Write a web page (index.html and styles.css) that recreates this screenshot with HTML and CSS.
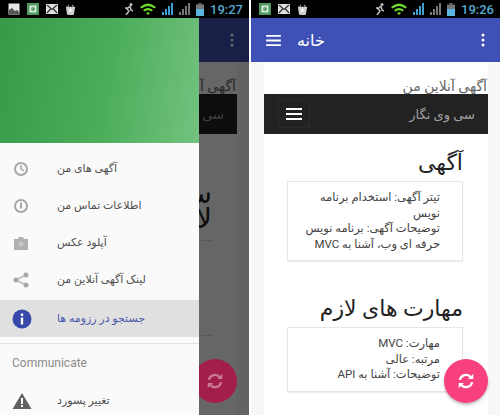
FILE: index.html
```html
<!DOCTYPE html>
<html lang="fa">
  <head>
    <meta charset="UTF-8" />
    <meta name="viewport" content="width=device-width, initial-scale=1.0" />
    <title>CV</title>
    <link rel="stylesheet" href="styles.css">
  </head>
  <body>
    <svg class="sprite">
      <symbol id="i-photo" viewBox="0 0 12 12"><rect x="0.5" y="0.5" width="11" height="11" fill="#e8e8e8"/><path d="M1 11V7l3-2 3 3 2-1 2 2v2z" fill="#555"/></symbol>
      <symbol id="i-app" viewBox="0 0 12 12"><rect width="12" height="12" fill="#4e9a5e"/><rect x="2.500" y="2.500" width="7" height="7" fill="#d6e8d8"/><circle cx="6" cy="6" r="2" fill="#5d9f6b"/></symbol>
      <symbol id="i-mail" viewBox="0 0 12 10"><rect width="12" height="10" fill="#e2e2e2"/><path d="M1 1l5 4.500L11 1M1 9l3.500-4M11 9L7.500 5" fill="none" stroke="#333" stroke-width="1.300"/></symbol>
      <symbol id="i-bot" viewBox="0 0 12 12"><path d="M1 3h10l-1 7q0 2-2 2H4q-2 0-2-2z" fill="#cfcfcf"/><path d="M3 3l1-2M9 3L8 1" stroke="#cfcfcf"/><circle cx="6" cy="7" r="2" fill="#eee"/></symbol>
      <symbol id="i-run" viewBox="0 0 10 12"><circle cx="7" cy="1.500" r="1.500" fill="#bbb"/><path d="M6 3L3 6l2 2-3 4M6 3l1 4 2 1M4 5L1 5" fill="none" stroke="#bbb" stroke-width="1.500"/></symbol>
      <symbol id="i-wifi" viewBox="0 0 16 12"><path d="M0 4q8-7 16 0l-1.500 1.500q-6.500-5-13 0z" fill="#6fdc2c"/><path d="M3 7q5-4 10 0l-1.500 1.500q-3.500-2.500-7 0z" fill="#6fdc2c"/><path d="M6 10q2-1.500 4 0l-2 2z" fill="#6fdc2c"/></symbol>
      <symbol id="i-sig" viewBox="0 0 11 12"><path d="M0 9h2v3H0zM3 6h2v6H3zM6 3h2v9H6zM9 0h2v12H9z" fill="currentColor"/></symbol>
      <symbol id="i-bat" viewBox="0 0 8 13"><path d="M2.500 0h3v1.500h-3z" fill="#778"/><path d="M0 1.500h8V6H0z" fill="#777"/><path d="M0 6h8v7H0z" fill="#5ab4e0"/></symbol>
      <symbol id="i-menu" viewBox="0 0 16 12"><path d="M0 0h16v2H0zM0 5h16v2H0zM0 10h16v2H0z" fill="currentColor"/></symbol>
      <symbol id="i-more" viewBox="0 0 4 14"><circle cx="2" cy="2" r="1.500" fill="currentColor"/><circle cx="2" cy="7" r="1.500" fill="currentColor"/><circle cx="2" cy="12" r="1.500" fill="currentColor"/></symbol>
      <symbol id="i-sync" viewBox="0 0 16 16"><path d="M2.500 7a5.600 5.600 0 0 1 9.800-2.400M13.500 9a5.600 5.600 0 0 1-9.800 2.400" fill="none" stroke="currentColor" stroke-width="2"/><path d="M14.500 1.500v4.700h-4.700zM1.500 14.500V9.800h4.700z" fill="currentColor"/></symbol>
    </svg>

    <div class="screens">
      <div class="phone">
        <div class="status">
          <svg class="st" width="12" height="12"><use href="#i-photo"/></svg>
          <svg class="st" width="12" height="12"><use href="#i-app"/></svg>
          <svg class="st" width="12" height="10"><use href="#i-mail"/></svg>
          <svg class="st" width="11" height="11"><use href="#i-bot"/></svg>
          <span class="st-gap"></span>
          <svg width="10" height="12"><use href="#i-run"/></svg>
          <svg width="16" height="12"><use href="#i-wifi"/></svg>
          <svg class="sig-blue" width="11" height="12"><use href="#i-sig"/></svg>
          <svg class="sig-gray" width="11" height="12"><use href="#i-sig"/></svg>
          <svg width="8" height="13"><use href="#i-bat"/></svg>
          <span class="clock">19:27</span>
        </div>
        <div class="appbar">
          <svg class="menu-icon" width="15" height="11"><use href="#i-menu"/></svg>
          <span class="appbar-title">خانه</span>
          <svg class="more-icon" width="4" height="14"><use href="#i-more"/></svg>
        </div>
        <div class="page">
          <div class="wrap">
            <div class="page-caption">آگهی آنلاین من</div>
            <div class="navbar">
              <span class="toggle"><svg width="18" height="12"><use href="#i-menu"/></svg></span>
              <span class="brand">سی وی نگار</span>
            </div>
            <h2 class="hidden-heading">س&zwj;<br>لا</h2>
            <div class="hidden-box"></div>
          </div>
        </div>
        <div class="scrim"></div>
        <span class="fab fab-dim"><svg width="18" height="18"><use href="#i-sync"/></svg></span>
        <div class="drawer">
          <div class="drawer-head"></div>
          <div class="drawer-list">
            <div class="drawer-item">
              <svg class="drawer-icon" width="18" height="18" viewBox="0 0 18 18"><circle cx="9" cy="9" r="6" fill="none" stroke="#a8a8a8" stroke-width="2"/><path d="M9 5v4l3 2" fill="none" stroke="#a8a8a8" stroke-width="1.500"/></svg>
              <span>آگهی های من</span>
            </div>
            <div class="drawer-item">
              <svg class="drawer-icon" width="18" height="18" viewBox="0 0 18 18"><circle cx="9" cy="9" r="6" fill="none" stroke="#a8a8a8" stroke-width="2"/><path d="M9 5.500v6" stroke="#a8a8a8" stroke-width="2"/></svg>
              <span>اطلاعات تماس من</span>
            </div>
            <div class="drawer-item">
              <svg class="drawer-icon" width="18" height="18" viewBox="0 0 18 18"><path d="M2 5h4l1-2h4l1 2h4v11H2z" fill="#b0b0b0"/><circle cx="9" cy="10" r="2.500" fill="#c8c8c8"/></svg>
              <span>آپلود عکس</span>
            </div>
            <div class="drawer-item">
              <svg class="drawer-icon" width="18" height="18" viewBox="0 0 18 18"><circle cx="14" cy="4" r="2.500" fill="#a8a8a8"/><circle cx="4" cy="9" r="2.500" fill="#a8a8a8"/><circle cx="14" cy="14" r="2.500" fill="#a8a8a8"/><path d="M14 4L4 9l10 5" fill="none" stroke="#a8a8a8" stroke-width="1.300"/></svg>
              <span>لینک آگهی آنلاین من</span>
            </div>
            <div class="drawer-item active">
              <svg class="drawer-icon" width="20" height="20" viewBox="0 0 20 20"><circle cx="10" cy="10" r="9.500" fill="#3949ab"/><path d="M8.800 4.500h2.400v2.400H8.800zM8.800 8.500h2.400v7H8.800z" fill="#fff"/></svg>
              <span>جستجو در رزومه ها</span>
            </div>
          </div>
          <div class="drawer-sep"></div>
          <div class="drawer-section">Communicate</div>
          <div class="drawer-item">
            <svg class="drawer-icon" width="20" height="18" viewBox="0 0 20 18"><path d="M10 1l9.500 16H.5z" fill="#616161"/><path d="M9 6h2v6H9zM9 13h2v2H9z" fill="#fafafa"/></svg>
            <span>تغییر پسورد</span>
          </div>
        </div>
      </div>

      <div class="phone">
        <div class="status">
          <svg class="st" width="12" height="12"><use href="#i-app"/></svg>
          <svg class="st" width="12" height="10"><use href="#i-mail"/></svg>
          <svg class="st" width="11" height="11"><use href="#i-bot"/></svg>
          <span class="st-gap"></span>
          <svg width="10" height="12"><use href="#i-run"/></svg>
          <svg width="16" height="12"><use href="#i-wifi"/></svg>
          <svg class="sig-blue" width="11" height="12"><use href="#i-sig"/></svg>
          <svg class="sig-gray" width="11" height="12"><use href="#i-sig"/></svg>
          <svg width="8" height="13"><use href="#i-bat"/></svg>
          <span class="clock">19:26</span>
        </div>
        <div class="appbar">
          <svg class="menu-icon" width="15" height="11"><use href="#i-menu"/></svg>
          <span class="appbar-title">خانه</span>
          <svg class="more-icon" width="4" height="14"><use href="#i-more"/></svg>
        </div>
        <div class="page">
          <div class="wrap">
            <div class="page-caption">آگهی آنلاین من</div>
            <div class="navbar">
              <span class="toggle"><svg width="18" height="12"><use href="#i-menu"/></svg></span>
              <span class="brand">سی وی نگار</span>
            </div>
            <div class="section">
              <h2>آگهی</h2>
              <div class="box">
                <div>تیتر آگهی: استخدام برنامه</div>
                <div>نویس</div>
                <div>توضیحات آگهی: برنامه نویس</div>
                <div>حرفه ای وب، آشنا به MVC</div>
              </div>
            </div>
            <div class="section">
              <h2>مهارت های لازم</h2>
              <div class="box">
                <div>مهارت: MVC</div>
                <div>مرتبه: عالی</div>
                <div>توضیحات: آشنا به API</div>
              </div>
            </div>
          </div>
        </div>
        <span class="fab"><svg width="18" height="18"><use href="#i-sync"/></svg></span>
      </div>
    </div>
  </body>
</html>
```

FILE: styles.css
```css
body {
  font-family: Roboto, "DejaVu Sans", sans-serif;
  margin: 0;
  padding: 0;
  background-color: #ffffff;
  overflow: hidden;
}

.sprite {
  display: none;
}

.screens {
  display: flex;
  justify-content: space-between;
  width: 500px;
  height: 415px;
}

.phone {
  position: relative;
  width: 249px;
  height: 415px;
  overflow: hidden;
  display: flex;
  flex-direction: column;
}

.status {
  height: 18px;
  flex: none;
  background-color: #000000;
  display: flex;
  align-items: center;
  gap: 6px;
  padding: 0 6px 0 8px;
}

.st {
  flex: none;
  margin-right: 1px;
}

.st-gap {
  flex: 1;
}

.sig-blue {
  color: #3f9fd0;
}

.sig-gray {
  color: #777777;
}

.clock {
  font-family: Roboto, sans-serif;
  font-size: 13px;
  font-weight: 500;
  color: #56a8cf;
}

.appbar {
  height: 44px;
  flex: none;
  background-color: #3f51b5;
  color: #ffffff;
  display: flex;
  align-items: center;
  padding: 0 15px;
}

.appbar-title {
  font-size: 16px;
  margin-left: 16px;
  flex: 1;
}

.page {
  flex: 1;
  background-color: #f7f7f7;
  padding: 0 12px 0 13px;
}

.wrap {
  background-color: #ffffff;
  height: 100%;
}

.page-caption {
  font-size: 14px;
  line-height: 16px;
  padding: 16px 1px 0 0;
  color: #666666;
  text-align: right;
}

.navbar {
  height: 40px;
  background-color: #222222;
  display: flex;
  align-items: center;
  justify-content: space-between;
  padding: 0 13px 0 14px;
}

.toggle {
  display: flex;
  padding: 7px 6px;
  color: #ffffff;
  border: 1px solid #2a2a2a;
}

.brand {
  font-size: 13px;
  color: #a0a0a0;
}

.section {
  padding: 0 25px 0 23px;
}

.section h2 {
  font-size: 22px;
  line-height: 37px;
  padding-top: 10px;
  font-weight: normal;
  color: #222222;
  margin: 0;
  text-align: right;
}

.section + .section {
  margin-top: 19px;
}

.box {
  background-color: #ffffff;
  border: 1px solid #e6e6e6;
  box-shadow: 0 1px 1px #eeeeee;
  padding: 8px 22px 8px 8px;
  font-size: 11.5px;
  line-height: 15.5px;
  color: #444444;
  direction: rtl;
}

.hidden-heading {
  font-size: 28px;
  line-height: 25px;
  font-weight: normal;
  color: #222222;
  margin: 47px 25px 0 0;
  text-align: right;
}

.hidden-box {
  height: 94px;
  margin: 9px 25px 0 0;
  border-top: 1px solid #dddddd;
  border-bottom: 1px solid #dddddd;
}

.scrim {
  position: absolute;
  inset: 18px 0 0 0;
  background-color: rgba(0, 0, 0, 0.6);
}

.fab {
  position: absolute;
  left: 193px;
  top: 359px;
  width: 44px;
  height: 44px;
  border-radius: 50%;
  background-color: #f8407f;
  color: #ffffff;
  box-shadow: 0 2px 3px rgba(0, 0, 0, 0.25);
  display: flex;
  align-items: center;
  justify-content: center;
}

.fab-dim {
  background-color: #a31e4c;
  color: #c97a95;
  box-shadow: none;
}

.drawer {
  position: absolute;
  left: 0;
  top: 18px;
  bottom: 0;
  width: 199px;
  background-color: #fafafa;
}

.drawer-head {
  height: 125px;
  background: linear-gradient(100deg, #379a49 0%, #4cae5b 55%, #73c27e 100%);
}

.drawer-list {
  padding-top: 7px;
}

.drawer-item {
  height: 37px;
  display: flex;
  align-items: center;
  font-size: 11px;
  color: #505050;
  position: relative;
  padding-left: 57px;
}

.drawer-icon {
  position: absolute;
  left: 12px;
  top: 50%;
  transform: translateY(-50%);
}

.drawer-item.active {
  background-color: #e0e0e0;
  color: #4a56ad;
  margin-top: 2px;
}

.drawer-sep {
  border-bottom: 1px solid #e4e4e4;
  margin-top: 6px;
}

.drawer-section {
  font-size: 12px;
  line-height: 38px;
  color: #8a8a8a;
  padding-left: 12px;
}
```
